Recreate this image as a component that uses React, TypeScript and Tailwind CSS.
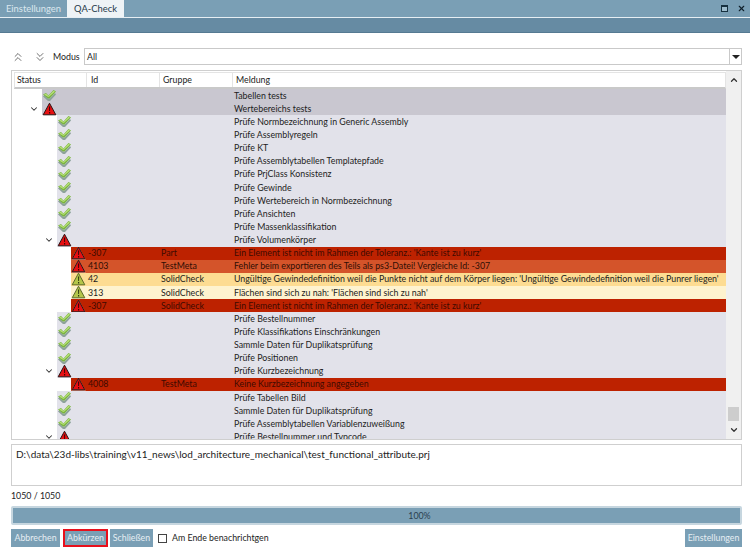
import React from "react";
import { ChevronDown, ChevronUp, ChevronsDown, ChevronsUp, X } from "lucide-react";

const Check = () => (
  <svg width="15" height="13" viewBox="0 0 15 13" className="shrink-0">
    <path d="M1 7.5 L6 12 L8 12 L14 5.5 L13 4 L7.5 9.5 L6 9.5 L2.5 6 Z" fill="#8da39a" />
    <path d="M1 5.5 L4 4 L6.5 6.5 L11.5 1 L14 2.5 L7.5 9.5 L6 9.5 Z" fill="#79b53c" />
    <path d="M2 5.5 L4 4.8 L6.5 7 L11.5 1.8 L13 2.6 L7 7.8 L6 7.8 Z" fill="#b9e07c" />
  </svg>
);

const Warn = ({ yellow, halo }: { yellow?: boolean; halo?: boolean }) => (
  <svg width="15" height="14" viewBox="0 0 15 14" className="shrink-0">
    {halo && <path d="M7.5 0.5 L14.7 13.7 L0.3 13.7 Z" fill="#d9a79a" />}
    <path
      d="M7.5 1.2 L13.8 12.8 L1.2 12.8 Z"
      fill={yellow ? "#b4c64a" : "#e60f12"}
      stroke={yellow ? "#5d6a2a" : "#2a1414"}
      strokeWidth="1"
      strokeLinejoin="round"
    />
    <path d="M7 4.5 H8.2 L8 9 H7.2 Z" fill={yellow ? "#30380f" : "#3a0505"} />
    <rect x="7" y="10" width="1.2" height="1.5" fill={yellow ? "#30380f" : "#3a0505"} />
  </svg>
);

type Kind = "ok" | "err";
type Row =
  | { t: "g0" | "g1"; kind: Kind; msg: string; open?: boolean }
  | { t: "red" | "orange" | "yellow" | "pale"; id: string; group: string; msg: string };

const rows: Row[] = [
  { t: "g0", kind: "ok", msg: "Tabellen tests" },
  { t: "g0", kind: "err", msg: "Wertebereichs tests", open: true },
  { t: "g1", kind: "ok", msg: "Prüfe Normbezeichnung in Generic Assembly" },
  { t: "g1", kind: "ok", msg: "Prüfe Assemblyregeln" },
  { t: "g1", kind: "ok", msg: "Prüfe KT" },
  { t: "g1", kind: "ok", msg: "Prüfe Assemblytabellen Templatepfade" },
  { t: "g1", kind: "ok", msg: "Prüfe PrjClass Konsistenz" },
  { t: "g1", kind: "ok", msg: "Prüfe Gewinde" },
  { t: "g1", kind: "ok", msg: "Prüfe Wertebereich in Normbezeichnung" },
  { t: "g1", kind: "ok", msg: "Prüfe Ansichten" },
  { t: "g1", kind: "ok", msg: "Prüfe Massenklassifikation" },
  { t: "g1", kind: "err", msg: "Prüfe Volumenkörper", open: true },
  { t: "red", id: "-307", group: "Part", msg: "Ein Element ist nicht im Rahmen der Toleranz.: 'Kante ist zu kurz'" },
  { t: "orange", id: "4103", group: "TestMeta", msg: "Fehler beim exportieren des Teils als ps3-Datei! Vergleiche Id: -307" },
  { t: "yellow", id: "42", group: "SolidCheck", msg: "Ungültige Gewindedefinition weil die Punkte nicht auf dem Körper liegen: 'Ungültige Gewindedefinition weil die Punrer liegen'" },
  { t: "pale", id: "313", group: "SolidCheck", msg: "Flächen sind sich zu nah: 'Flächen sind sich zu nah'" },
  { t: "red", id: "-307", group: "SolidCheck", msg: "Ein Element ist nicht im Rahmen der Toleranz.: 'Kante ist zu kurz'" },
  { t: "g1", kind: "ok", msg: "Prüfe Bestellnummer" },
  { t: "g1", kind: "ok", msg: "Prüfe Klassifikations Einschränkungen" },
  { t: "g1", kind: "ok", msg: "Sammle Daten für Duplikatsprüfung" },
  { t: "g1", kind: "ok", msg: "Prüfe Positionen" },
  { t: "g1", kind: "err", msg: "Prüfe Kurzbezeichnung", open: true },
  { t: "red", id: "4008", group: "TestMeta", msg: "Keine Kurzbezeichnung angegeben" },
  { t: "g1", kind: "ok", msg: "Prüfe Tabellen Bild" },
  { t: "g1", kind: "ok", msg: "Sammle Daten für Duplikatsprüfung" },
  { t: "g1", kind: "ok", msg: "Prüfe Assemblytabellen Variablenzuweißung" },
  { t: "g1", kind: "err", msg: "Prüfe Bestellnummer und Typcode", open: true },
];

const leafBg = {
  red: "bg-[#bd2200] text-[#3d0a00]",
  orange: "bg-[#d4542a] text-[#2e0e04]",
  yellow: "bg-[#fddc92] text-[#1c1c1c]",
  pale: "bg-[#fef3cf] text-[#1c1c1c]",
};

function TreeRow({ row }: { row: Row }) {
  if (row.t === "g0" || row.t === "g1") {
    const g0 = row.t === "g0";
    return (
      <div className="flex h-[13.14px] items-center shrink-0">
        <div className={`${g0 ? "w-[28px]" : "w-[43px]"} h-full flex items-center justify-end pr-[3px] shrink-0`}>
          {row.open && <ChevronDown size={10} strokeWidth={2.5} className="text-[#333]" />}
        </div>
        <div className={`flex-1 h-full flex items-center ${g0 ? "bg-[#c9c7d0]" : "bg-[#e2e2ea]"}`}>
          <div className="w-[15px] shrink-0 flex items-center">{row.kind === "ok" ? <Check /> : <Warn />}</div>
          <div className={`${g0 ? "w-[177px]" : "w-[162px]"} shrink-0`} />
          <span className="whitespace-nowrap text-[#222] pt-[1px]">{row.msg}</span>
        </div>
      </div>
    );
  }
  const warnY = row.t === "yellow" || row.t === "pale";
  return (
    <div className="flex h-[13.14px] items-center shrink-0">
      <div className="w-[57px] shrink-0" />
      <div className={`flex-1 min-w-0 h-full flex items-center overflow-hidden ${leafBg[row.t]}`}>
        <div className="w-[17px] shrink-0 flex items-center"><Warn yellow={warnY} halo={!warnY} /></div>
        <div className="w-[73px] shrink-0 pt-[1px]">{row.id}</div>
        <div className="w-[73px] shrink-0 pt-[1px]">{row.group}</div>
        <span className="whitespace-nowrap pt-[1px]">{row.msg}</span>
      </div>
    </div>
  );
}

const Btn = ({ children, className = "" }: { children: React.ReactNode; className?: string }) => (
  <div className={`h-[18px] bg-[#7a9fb5] text-[#e6eef3] flex items-center justify-center ${className}`}>{children}</div>
);

export default function App() {
  return (
    <div
      className="w-[750px] h-[552px] bg-white flex flex-col text-[8.8px] leading-none text-[#222] overflow-hidden"
      style={{ fontFamily: 'Lato, "Open Sans", sans-serif' }}
    >
      {/* title strip */}
      <div className="h-[17px] bg-[#7a9fb5] flex items-stretch shrink-0">
        <div className="w-[67px] flex items-center justify-center text-[#dbe7ee] text-[9.4px]">Einstellungen</div>
        <div className="w-[57px] bg-[#eef3f6] flex items-center justify-center text-[#1f3a4a] text-[9.4px]">QA-Check</div>
        <div className="flex-1 flex items-center justify-end gap-[9px] pr-[4px]">
          <div className="w-[7px] h-[7px] border border-[#16303f] border-t-2 bg-[#9dbccd]" />
          <X size={9} strokeWidth={3} className="text-[#10202a]" />
        </div>
      </div>
      <div className="h-[16px] bg-[#668ba3] border-t border-[#e6eef3] border-b border-b-[#557a92] shrink-0" />

      <div className="flex-1 flex flex-col px-[11px] min-h-0 pr-[8px]">
        {/* Modus */}
        <div className="flex items-center h-[17px] mt-[15px] shrink-0">
          <ChevronsUp size={14} strokeWidth={1.3} className="text-[#444]" />
          <ChevronsDown size={14} strokeWidth={1.3} className="ml-[8px] text-[#444]" />
          <span className="ml-[6px] w-[27px] text-[#222] pt-[1px]">Modus</span>
          <div className="ml-[4px] flex-1 h-full border border-[#c9c9c9] flex items-center">
            <span className="flex-1 pl-[2px] pt-[1px]">All</span>
            <div className="w-[12px] h-full border-l border-[#c9c9c9] flex items-center justify-center">
              <div className="w-0 h-0 border-l-[4px] border-r-[4px] border-t-[4px] border-l-transparent border-r-transparent border-t-[#222]" />
            </div>
          </div>
        </div>

        {/* Tree list */}
        <div className="mt-[5px] h-[370px] border border-[#cfcfcf] shrink-0 flex overflow-hidden">
          <div className="flex-1 min-w-0 flex flex-col pl-[2px] pt-[1px]">
            <div className="h-[17px] shrink-0 flex items-center border border-[#e4e4e4] border-b-2 border-b-[#c9c9c9]">
              <div className="w-[72px] h-full flex items-center pl-[2px] pt-[1px] border-r border-[#e4e4e4]">Status</div>
              <div className="w-[73px] h-full flex items-center pl-[4px] pt-[1px] border-r border-[#e4e4e4]">Id</div>
              <div className="w-[73px] h-full flex items-center pl-[3px] pt-[1px] border-r border-[#e4e4e4]">Gruppe</div>
              <div className="flex-1 pl-[3px] pt-[1px]">Meldung</div>
            </div>
            <div className="flex-1 min-h-0 flex flex-col overflow-hidden">
              {rows.map((r, i) => <TreeRow key={i} row={r} />)}
            </div>
          </div>
          <div className="w-[15px] shrink-0 bg-[#f0f0f0] flex flex-col items-center justify-between py-[4px] relative">
            <ChevronUp size={10} strokeWidth={3} className="text-[#333]" />
            <div className="flex-1" />
            <div className="w-[11px] h-[14px] bg-[#cdcdcd] mb-[4px]" />
            <ChevronDown size={10} strokeWidth={3} className="text-[#333]" />
          </div>
        </div>

        {/* Path */}
        <div className="mt-[4px] h-[42px] border border-[#cfcfcf] shrink-0 pl-[4px] pt-[4px] text-[#222] text-[10px]">
          D:\data\23d-libs\training\v11_news\lod_architecture_mechanical\test_functional_attribute.prj
        </div>

        <div className="mt-[4px] h-[12px] flex items-center pt-[1px] shrink-0">1050 / 1050</div>

        {/* Progress */}
        <div className="mt-[4px] h-[19px] border-2 border-[#c6d6df] bg-[#7a9fb5] rounded-[2px] flex items-center justify-center pl-[86px] pt-[1px] text-[#2a4050] shrink-0">100%</div>

        {/* Buttons */}
        <div className="mt-[4px] flex items-center shrink-0">
          <Btn className="w-[49px]">Abbrechen</Btn>
          <Btn className="w-[45px] ml-[3px] border-2 border-[#e8101c]">Abkürzen</Btn>
          <Btn className="w-[43px] ml-[2px]">Schließen</Btn>
          <div className="w-[9px] h-[9px] ml-[5px] border border-[#444] bg-white" />
          <span className="ml-[5px]">Am Ende benachrichtgen</span>
          <div className="flex-1" />
          <Btn className="w-[57px]">Einstellungen</Btn>
        </div>
      </div>
    </div>
  );
}
